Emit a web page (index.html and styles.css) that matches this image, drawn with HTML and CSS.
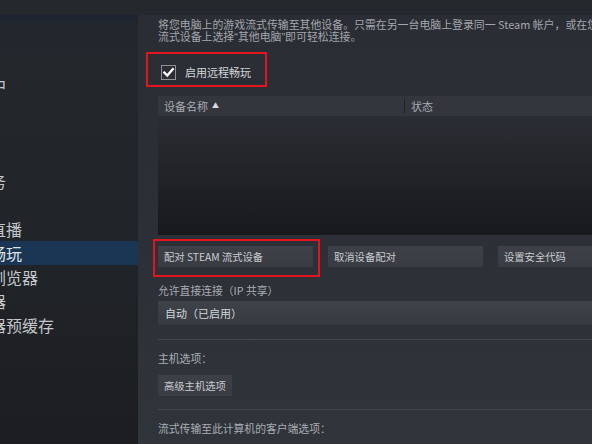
FILE: index.html
```html
<!DOCTYPE html>
<html lang="zh-CN">
<head>
<meta charset="utf-8">
<title>远程畅玩</title>
<link rel="stylesheet" href="styles.css">
</head>
<body>
<div class="window">
  <div class="topbar"></div>
  <div class="main">
    <nav class="sidebar">
      <ul class="nav">
        <li>账户</li>
        <li>家庭</li>
        <li>游戏中</li>
        <li>界面</li>
        <li>库</li>
        <li>下载</li>
        <li>云服务</li>
        <li>语音</li>
        <li>游戏直播</li>
        <li class="active">远程畅玩</li>
        <li>网页浏览器</li>
        <li>控制器</li>
        <li>着色器预缓存</li>
      </ul>
    </nav>
    <section class="panel">
      <div class="content">
        <p class="desc">
          <span class="desc-line">将您电脑上的游戏流式传输至其他设备。只需在另一台电脑上登录同一 Steam 帐户，或在您的 Steam Link 或其他</span>
          <span class="desc-line">流式设备上选择<span class="q">“</span>其他电脑<span class="q">”</span>即可轻松连接。</span>
        </p>

        <div class="check-row">
          <span class="checkbox">
            <svg width="15" height="15" viewBox="0 0 15 15">
              <rect x="0.5" y="0.5" width="14" height="14" fill="#2b2e34" stroke="#8f9297"/>
              <path d="M3.3 7.6 L6.3 10.6 L11.8 4.2" fill="none" stroke="#ffffff" stroke-width="2.3" stroke-linecap="square"/>
            </svg>
          </span>
          <span class="check-label">启用远程畅玩</span>
          <span class="highlight hl-check"></span>
        </div>

        <div class="table">
          <div class="thead">
            <div class="th th-name">设备名称 <span class="sort">&#9650;</span></div>
            <div class="th th-status">状态</div>
          </div>
          <div class="tbody"></div>
        </div>

        <div class="btn-row">
          <div class="btn">配对 STEAM 流式设备<span class="highlight hl-pair"></span></div>
          <div class="btn">取消设备配对</div>
          <div class="btn">设置安全代码</div>
        </div>

        <div class="label label-ip">允许直接连接（IP 共享）</div>
        <div class="dropdown">自动（已启用）</div>

        <div class="sep sep-1"></div>
        <div class="label label-host">主机选项：</div>
        <div class="btn btn-small">高级主机选项</div>

        <div class="sep sep-2"></div>
        <div class="label label-client">流式传输至此计算机的客户端选项：</div>
      </div>
    </section>
  </div>
</div>
</body>
</html>
```

FILE: styles.css
```css
* {
  box-sizing: border-box;
}

html, body {
  margin: 0;
  padding: 0;
}

body {
  width: 592px;
  height: 444px;
  overflow: hidden;
  background: #25282d;
  font-family: "Noto Sans CJK SC", "Liberation Sans", sans-serif;
  color: #b4b8bd;
}

.window {
  display: flex;
  flex-direction: column;
  width: 592px;
  height: 444px;
}

.topbar {
  height: 15px;
  flex: 0 0 15px;
  background: #25282d;
}

.main {
  flex: 1;
  display: flex;
  min-height: 0;
  overflow: hidden;
}

/* ---------- sidebar ---------- */
.sidebar {
  width: 138px;
  flex: 0 0 138px;
  overflow: hidden;
  background: linear-gradient(to bottom, #1c2433 0px, #22262d 8px, #24272c 40px, #202327 60%, #1c1e21 100%);
}

.nav {
  list-style: none;
  margin: 0;
  padding: 10px 0 0 0;
}

.nav li {
  height: 24px;
  line-height: 24px;
  font-size: 16px;
  color: #c4c7cb;
  white-space: nowrap;
  text-indent: -42px;
}

.nav li.active {
  background: #1b3655;
  color: #dfe3e7;
}

/* ---------- panel ---------- */
.panel {
  flex: 1;
  overflow: hidden;
  background: linear-gradient(to bottom, #2a2d33 0%, #2c2f36 50%, #30343b 100%);
}

.content {
  width: 660px;
  padding: 3px 0 0 20px;
}

.desc {
  margin: 0;
  font-size: 10.9px;
  line-height: 12px;
  color: #a3a7ad;
}

.desc-line {
  display: block;
  white-space: nowrap;
}

.q {
  font-family: "Liberation Sans", sans-serif;
}

.check-row {
  position: relative;
  display: flex;
  align-items: center;
  height: 15px;
  margin-top: 22px;
}

.checkbox {
  display: flex;
  width: 15px;
  height: 15px;
  margin-left: 3px;
}

.check-label {
  margin-left: 9px;
  font-size: 11px;
  line-height: 15px;
  color: #d3d6d9;
}

.highlight {
  position: absolute;
  border: 2px solid #e3141e;
  pointer-events: none;
}

.hl-check {
  left: -12px;
  top: -13px;
  width: 121px;
  height: 35px;
}

/* ---------- table ---------- */
.table {
  margin-top: 16px;
}

.thead {
  display: flex;
  height: 20px;
  background: #33363d;
}

.th {
  font-size: 11px;
  line-height: 20px;
  color: #a8acb1;
  padding-left: 6px;
  white-space: nowrap;
}

.th-name {
  width: 247px;
  display: flex;
  align-items: center;
  gap: 4px;
  position: relative;
}

.th-name::after {
  content: "";
  position: absolute;
  right: 0;
  top: 3px;
  bottom: 3px;
  width: 1px;
  background: #202226;
}

.sort {
  font-size: 7px;
  line-height: 20px;
  color: #d8dadd;
  margin-top: -3px;
}

.th-status {
  flex: 1;
}

.tbody {
  height: 119px;
  background: linear-gradient(to bottom, #2a2d33 0%, #222429 45%, #17191c 100%);
}

/* ---------- buttons ---------- */
.btn-row {
  display: flex;
  gap: 15px;
  margin-top: 11px;
}

.btn {
  position: relative;
  width: 155px;
  height: 21px;
  padding-left: 6px;
  font-size: 10.3px;
  line-height: 21px;
  color: #c9ccd0;
  white-space: nowrap;
  background: linear-gradient(to bottom, #3d4047 0%, #393c43 100%);
}

.hl-pair {
  left: -5px;
  top: -7px;
  width: 167px;
  height: 38px;
}

.label {
  font-size: 10.8px;
  line-height: 14px;
  color: #a9adb2;
  white-space: nowrap;
}

.label-ip {
  margin-top: 16px;
}

.dropdown {
  margin-top: 4px;
  height: 24px;
  padding-left: 7px;
  font-size: 11px;
  line-height: 24px;
  color: #d4d7da;
  background: linear-gradient(to bottom, #3e4249 0%, #373a41 100%);
}

.sep {
  height: 1px;
  background: #43474e;
}

.sep-1 {
  margin-top: 14px;
}

.label-host {
  margin-top: 11px;
}

.btn-small {
  width: 74px;
  margin-top: 10px;
}

.sep-2 {
  margin-top: 13px;
}

.label-client {
  margin-top: 11px;
}
```
